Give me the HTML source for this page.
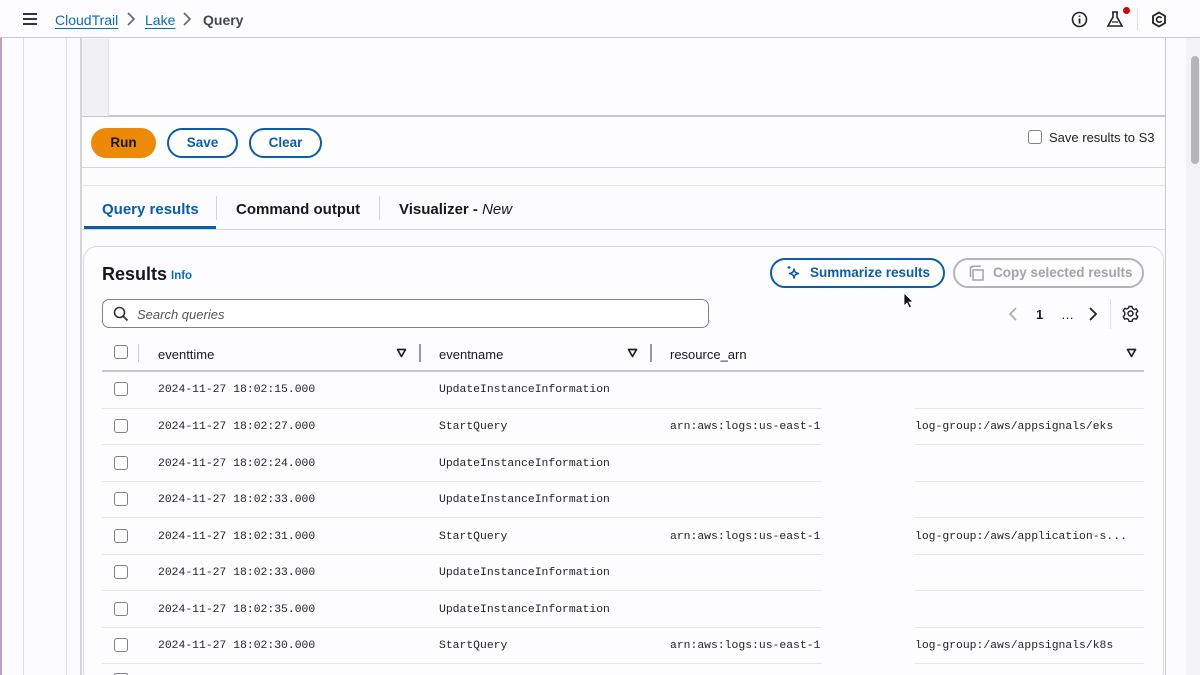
<!DOCTYPE html>
<html style="width:1200px;height:675px;overflow:hidden"><head><meta charset="utf-8">
<style>
*{margin:0;padding:0;box-sizing:border-box}
body{width:1200px;height:675px;overflow:hidden;background:#fcfbfd;font-family:"Liberation Sans",sans-serif;color:#16191f;position:relative}
.a{position:absolute}
.mono{font-family:"Liberation Mono",monospace;font-size:11.4px;color:#232323}
.cb{position:absolute;width:14px;height:14px;border:1.6px solid #7d8189;border-radius:3px;background:#fff}
.hl{position:absolute;height:1px;background:#e6e6ea}
.btn{position:absolute;height:30px;border-radius:16px;border:2px solid #0a5ea8;color:#0a5ea8;font-weight:bold;font-size:13.5px;text-align:center;line-height:26px;background:#fff}
.b{font-weight:bold}
</style></head><body>
<div class="a" style="left:0;top:38px;width:2px;height:637px;background:#b9a3c5"></div>
<div class="a" style="left:23px;top:38px;width:1px;height:637px;background:#dcdbe0"></div>
<div class="a" style="left:66px;top:38px;width:1px;height:637px;background:#dcdbe0"></div>
<div class="a" style="left:80px;top:38px;width:2px;height:637px;background:#d5d4da"></div>
<div class="a" style="left:1165px;top:38px;width:1px;height:637px;background:#c9c9cf"></div>
<div class="a" style="left:1186px;top:38px;width:14px;height:637px;background:#f3f2f5"></div>
<div class="a" style="left:1191px;top:56px;width:8px;height:108px;border-radius:4px;background:#b5b5b9"></div>

<div class="a" style="left:0;top:0;width:1200px;height:38px;background:#fdfcfe;border-bottom:1.5px solid #c8c8cc"></div>
<div class="a" style="left:23px;top:13px;width:14px;height:2px;background:#333;box-shadow:0 5px 0 #333,0 10px 0 #333"></div>
<div class="a" style="left:55px;top:12px;font-size:14px;color:#0b6bb8;text-decoration:underline;text-underline-offset:3px">CloudTrail</div>
<svg class="a" style="left:126px;top:12px" width="10" height="14"><path d="M2 1l6 6-6 6" fill="none" stroke="#666" stroke-width="1.6"/></svg>
<div class="a" style="left:145px;top:12px;font-size:14px;color:#0b6bb8;text-decoration:underline;text-underline-offset:3px">Lake</div>
<svg class="a" style="left:182px;top:12px" width="10" height="14"><path d="M2 1l6 6-6 6" fill="none" stroke="#666" stroke-width="1.6"/></svg>
<div class="a b" style="left:203px;top:12px;font-size:14px;color:#414750">Query</div>
<svg class="a" style="left:1071px;top:11px" width="17" height="17"><circle cx="8.5" cy="8.5" r="7" fill="none" stroke="#222" stroke-width="1.6"/><path d="M8.5 7.5v5M8.5 4.5v1.2" stroke="#222" stroke-width="1.8"/></svg>
<svg class="a" style="left:1106px;top:9px" width="20" height="20"><path d="M6 3h6M7 3v5l-5 9h14l-5-9V3" fill="none" stroke="#222" stroke-width="1.6"/><path d="M6 13h6" stroke="#222" stroke-width="1.2"/></svg>
<div class="a" style="left:1123px;top:7px;width:7px;height:7px;border-radius:50%;background:#d40000"></div>
<div class="a" style="left:1137px;top:8px;width:1px;height:22px;background:#ddd"></div>
<svg class="a" style="left:1151px;top:11px" width="16" height="17"><path d="M8 1.5l6 3.5v7l-6 3.5-6-3.5v-7z" fill="none" stroke="#222" stroke-width="1.8"/><path d="M10.5 7a2.7 2.7 0 1 0 0 3" fill="none" stroke="#222" stroke-width="1.6"/></svg>

<div class="a" style="left:82px;top:39px;width:1083px;height:78px;background:#fdfcfe;border-bottom:2px solid #c6c6cb"></div>
<div class="a" style="left:82px;top:39px;width:27px;height:77px;background:#f1f0f3;border-right:1px solid #e4e3e7"></div>
<div class="a" style="left:82px;top:117px;width:1083px;height:51px;border-bottom:1.5px solid #d7d6db;background:#fdfcfe"></div>
<div class="a b" style="left:91px;top:128px;width:65px;height:30px;border-radius:16px;background:#ec8a07;color:#16191f;font-size:13.5px;text-align:center;line-height:30px">Run</div>
<div class="btn" style="left:167px;top:128px;width:71px">Save</div>
<div class="btn" style="left:249px;top:128px;width:73px">Clear</div>
<div class="cb" style="left:1028px;top:130px"></div>
<div class="a" style="left:1049px;top:130px;font-size:13px;color:#222">Save results to S3</div>

<div class="a" style="left:82px;top:185px;width:1083px;height:1px;background:#e3e2e6"></div>
<div class="a b" style="left:102px;top:201px;font-size:15px;color:#0a5ea8">Query results</div>
<div class="a" style="left:84px;top:226px;width:132px;height:3px;background:#0a5ea8"></div>
<div class="a" style="left:216px;top:196px;width:1px;height:24px;background:#d5d5d9"></div>
<div class="a b" style="left:236px;top:201px;font-size:15px;color:#16191f">Command output</div>
<div class="a" style="left:379px;top:196px;width:1px;height:24px;background:#d5d5d9"></div>
<div class="a b" style="left:399px;top:201px;font-size:15px;color:#16191f">Visualizer - <i style="font-weight:normal">New</i></div>
<div class="a" style="left:82px;top:229px;width:1083px;height:1px;background:#d6d5da"></div>

<div class="a" style="left:83px;top:246px;width:1081px;height:440px;border:1px solid #dad9de;border-radius:14px;background:#fdfcfe"></div>
<div class="a b" style="left:102px;top:264px;font-size:18px;color:#16191f">Results</div>
<div class="a b" style="left:171px;top:270px;font-size:11.5px;color:#0b6bb8">Info</div>
<div class="btn" style="left:770px;top:258px;width:175px;height:30px;line-height:26px;text-align:left;padding-left:38px">Summarize results</div>
<svg class="a" style="left:786px;top:265px" width="16" height="16"><path d="M8 4c.5 3 1.5 4 4.5 4.5C9.5 9 8.5 10 8 13 7.5 10 6.5 9 3.5 8.5 6.5 8 7.5 7 8 4z" fill="none" stroke="#0a5ea8" stroke-width="1.6" stroke-linejoin="round"/><path d="M3 1v3M1.5 2.5h3" stroke="#0a5ea8" stroke-width="1.2"/></svg>
<div class="a b" style="left:953px;top:258px;width:191px;height:30px;border:2px solid #b4b4b9;border-radius:16px;color:#a3a3a8;font-size:13.5px;line-height:26px;padding-left:38px">Copy selected results</div>
<svg class="a" style="left:969px;top:265px" width="16" height="16"><path d="M4 2H1.5v10" fill="none" stroke="#a3a3a8" stroke-width="1.5"/><path d="M4 5h10v10H4z" fill="none" stroke="#a3a3a8" stroke-width="1.5"/><path d="M2.8 1.2h9" stroke="#a3a3a8" stroke-width="1.5"/></svg>

<div class="a" style="left:102px;top:299px;width:607px;height:29px;border:1.5px solid #7d8189;border-radius:7px;background:#fff"></div>
<svg class="a" style="left:113px;top:306px" width="16" height="16"><circle cx="6.5" cy="6.5" r="5" fill="none" stroke="#333" stroke-width="1.6"/><path d="M10 10l4.5 4.5" stroke="#333" stroke-width="1.8"/></svg>
<div class="a" style="left:137px;top:307px;font-size:13px;font-style:italic;color:#555">Search queries</div>

<svg class="a" style="left:1008px;top:307px" width="10" height="14"><path d="M8 1L2 7l6 6" fill="none" stroke="#aaa" stroke-width="1.6"/></svg>
<div class="a b" style="left:1036px;top:307px;font-size:13px">1</div>
<div class="a" style="left:1061px;top:307px;font-size:13px">…</div>
<svg class="a" style="left:1088px;top:307px" width="10" height="14"><path d="M2 1l6 6-6 6" fill="none" stroke="#222" stroke-width="1.8"/></svg>
<div class="a" style="left:1110px;top:299px;width:1px;height:30px;background:#ddd"></div>
<svg class="a" style="left:1122px;top:305px" width="17" height="17"><circle cx="8.5" cy="8.5" r="2.5" fill="none" stroke="#222" stroke-width="1.5"/><path d="M7 1.5h3l.5 2 1.8 1 2-.7 1.5 2.6-1.5 1.4v2.4l1.5 1.4-1.5 2.6-2-.7-1.8 1-.5 2H7l-.5-2-1.8-1-2 .7-1.5-2.6 1.5-1.4V7.3L1.2 5.9l1.5-2.6 2 .7 1.8-1z" fill="none" stroke="#222" stroke-width="1.4" stroke-linejoin="round"/></svg>

<div class="cb" style="left:114px;top:345px"></div>
<div class="a" style="left:138px;top:344px;width:1px;height:18px;background:#ccc"></div>
<div class="a" style="left:158px;top:347px;font-size:13px">eventtime</div>
<svg class="a" style="left:396px;top:348px" width="11" height="10"><path d="M1.5 1.5h8L5.5 8.5z" fill="none" stroke="#222" stroke-width="1.7" stroke-linejoin="round"/></svg>
<div class="a" style="left:419px;top:344px;width:1.5px;height:18px;background:#999"></div>
<div class="a" style="left:439px;top:347px;font-size:13px">eventname</div>
<svg class="a" style="left:627px;top:348px" width="11" height="10"><path d="M1.5 1.5h8L5.5 8.5z" fill="none" stroke="#222" stroke-width="1.7" stroke-linejoin="round"/></svg>
<div class="a" style="left:650px;top:344px;width:1.5px;height:18px;background:#999"></div>
<div class="a" style="left:670px;top:347px;font-size:13px">resource_arn</div>
<svg class="a" style="left:1126px;top:348px" width="11" height="10"><path d="M1.5 1.5h8L5.5 8.5z" fill="none" stroke="#222" stroke-width="1.7" stroke-linejoin="round"/></svg>
<div class="a" style="left:102px;top:370px;width:1042px;height:1.5px;background:#c8c8cc"></div>

<div class="cb" style="left:114px;top:382px"></div><div class="a mono" style="left:158px;top:384px">2024-11-27 18:02:15.000</div><div class="a mono" style="left:439px;top:384px">UpdateInstanceInformation</div>
<div class="hl" style="left:102px;top:408px;width:720px"></div><div class="hl" style="left:915px;top:408px;width:229px"></div>

<div class="cb" style="left:114px;top:419px"></div><div class="a mono" style="left:158px;top:421px">2024-11-27 18:02:27.000</div><div class="a mono" style="left:439px;top:421px">StartQuery</div><div class="a mono" style="left:670px;top:421px">arn:aws:logs:us-east-1</div><div class="a mono" style="left:915px;top:421px">log-group:/aws/appsignals/eks</div>
<div class="hl" style="left:102px;top:444px;width:720px"></div><div class="hl" style="left:915px;top:444px;width:229px"></div>

<div class="cb" style="left:114px;top:456px"></div><div class="a mono" style="left:158px;top:458px">2024-11-27 18:02:24.000</div><div class="a mono" style="left:439px;top:458px">UpdateInstanceInformation</div>
<div class="hl" style="left:102px;top:481px;width:720px"></div><div class="hl" style="left:915px;top:481px;width:229px"></div>

<div class="cb" style="left:114px;top:492px"></div><div class="a mono" style="left:158px;top:494px">2024-11-27 18:02:33.000</div><div class="a mono" style="left:439px;top:494px">UpdateInstanceInformation</div>
<div class="hl" style="left:102px;top:517px;width:720px"></div><div class="hl" style="left:915px;top:517px;width:229px"></div>

<div class="cb" style="left:114px;top:529px"></div><div class="a mono" style="left:158px;top:531px">2024-11-27 18:02:31.000</div><div class="a mono" style="left:439px;top:531px">StartQuery</div><div class="a mono" style="left:670px;top:531px">arn:aws:logs:us-east-1</div><div class="a mono" style="left:915px;top:531px">log-group:/aws/application-s...</div>
<div class="hl" style="left:102px;top:554px;width:720px"></div><div class="hl" style="left:915px;top:554px;width:229px"></div>

<div class="cb" style="left:114px;top:565px"></div><div class="a mono" style="left:158px;top:567px">2024-11-27 18:02:33.000</div><div class="a mono" style="left:439px;top:567px">UpdateInstanceInformation</div>
<div class="hl" style="left:102px;top:590px;width:720px"></div><div class="hl" style="left:915px;top:590px;width:229px"></div>

<div class="cb" style="left:114px;top:602px"></div><div class="a mono" style="left:158px;top:604px">2024-11-27 18:02:35.000</div><div class="a mono" style="left:439px;top:604px">UpdateInstanceInformation</div>
<div class="hl" style="left:102px;top:627px;width:720px"></div><div class="hl" style="left:915px;top:627px;width:229px"></div>

<div class="cb" style="left:114px;top:638px"></div><div class="a mono" style="left:158px;top:640px">2024-11-27 18:02:30.000</div><div class="a mono" style="left:439px;top:640px">StartQuery</div><div class="a mono" style="left:670px;top:640px">arn:aws:logs:us-east-1</div><div class="a mono" style="left:915px;top:640px">log-group:/aws/appsignals/k8s</div>
<div class="hl" style="left:102px;top:663px;width:720px"></div><div class="hl" style="left:915px;top:663px;width:229px"></div>
<div class="a" style="left:114px;top:673px;width:14px;height:2px;border:1.6px solid #7d8189;border-bottom:none;border-radius:3px 3px 0 0"></div>

<svg class="a" style="left:903px;top:292px" width="12" height="18"><path d="M1 1v13l3-3 2.5 5 2-1-2.5-5h4z" fill="#111" stroke="#fff" stroke-width="0.8"/></svg>
</body></html>
